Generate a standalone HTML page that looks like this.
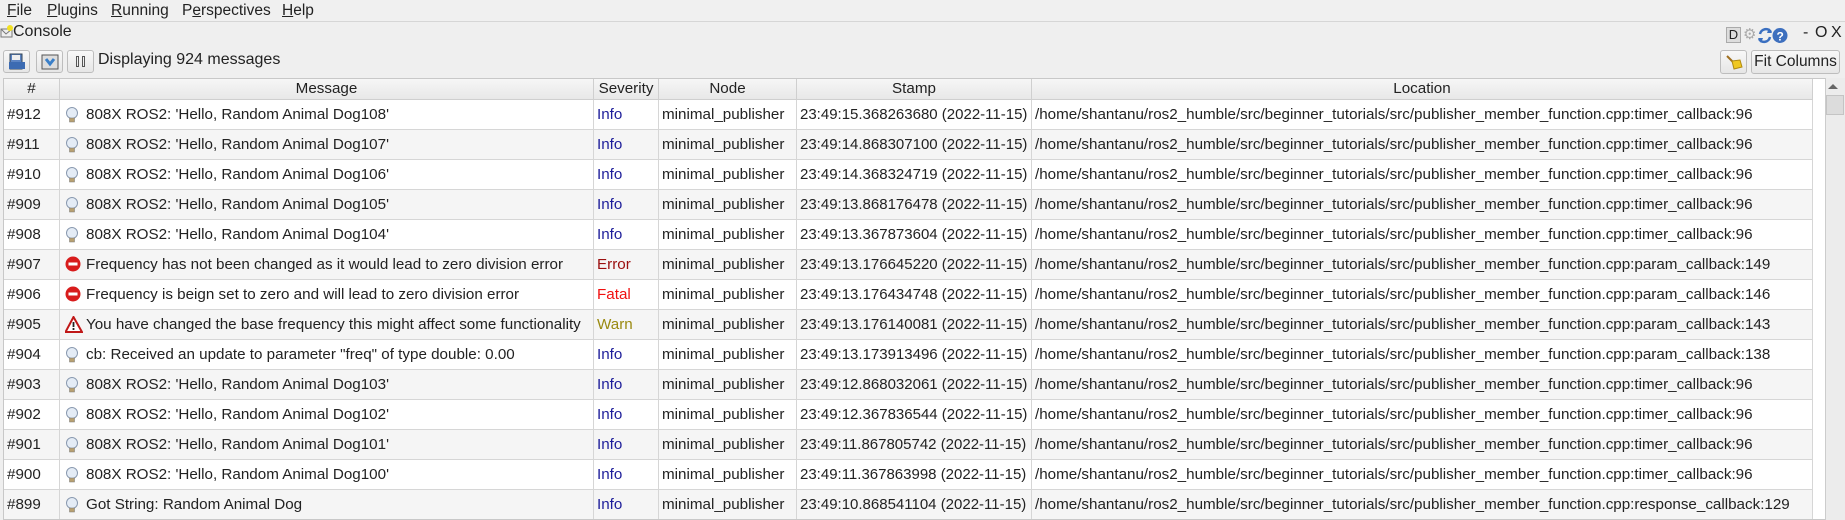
<!DOCTYPE html>
<html><head><meta charset="utf-8"><style>
*{margin:0;padding:0;box-sizing:border-box}
body{width:1845px;height:520px;overflow:hidden;background:#efefef;font-family:"Liberation Sans",sans-serif;font-size:15px;color:#222;position:relative}
.a{position:absolute;white-space:nowrap}
.menu{top:0;left:0;width:1845px;height:22px;background:#f0f0f0;border-bottom:1px solid #d6d6d6}
.menu span{position:absolute;top:2px;font-size:15.5px}
.btn{position:absolute;border:1px solid #bdbdbd;border-radius:3px;background:linear-gradient(#f8f8f8,#e6e6e6)}
.tbl{left:3px;top:78px;width:1823px;height:442px;background:#fff;border:1px solid #c8c8c8;overflow:hidden}
.hdr{position:absolute;top:0;height:21px;background:linear-gradient(#f6f6f6,#e8e8e8);border-right:1px solid #cfcfcf;border-bottom:1px solid #cfcfcf;text-align:center;line-height:20px;font-size:15.2px}
.row{position:absolute;left:0;width:1809px;height:30px;border-bottom:1px solid #d6d6d6}
.row.g{background:#f5f5f5}
.c{position:absolute;top:0;height:30px;line-height:29px;border-right:1px solid #d6d6d6;padding-left:3px;overflow:hidden;white-space:nowrap;font-size:15.2px}
.info{color:#1e1e9a}.err{color:#9b1010}.fat{color:#f01010}.warn{color:#9a8a10}
.ic{position:absolute;left:5px;top:6px}
</style></head><body>
<div class="a menu">
<span style="left:7px"><u>F</u>ile</span>
<span style="left:47px"><u>P</u>lugins</span>
<span style="left:111px"><u>R</u>unning</span>
<span style="left:182px">P<u>e</u>rspectives</span>
<span style="left:282px"><u>H</u>elp</span>
</div>
<svg class="a" style="left:0;top:25px" width="14" height="14"><rect x="1" y="4" width="11" height="8" fill="#eee" stroke="#777"/><path d="M1 4 L6 9 L12 4" fill="none" stroke="#777"/><circle cx="10" cy="3" r="3" fill="#f2e020"/></svg>
<div class="a" style="left:13px;top:23px;font-size:16px">Console</div>
<div class="a" style="left:1726px;top:27px;width:15px;height:16px;background:#ddd;border:1px solid #aaa;font-size:13px;line-height:14px;text-align:center">D</div>
<div class="a" style="left:1743px;top:25px;color:#aaa;font-size:15px">⚙</div>
<svg class="a" style="left:1757px;top:27px" width="32" height="17"><path d="M3 7 A6 6 0 0 1 14 5" fill="none" stroke="#3a6fc0" stroke-width="2.5"/><path d="M13 10 A6 6 0 0 1 2 12" fill="none" stroke="#3a6fc0" stroke-width="2.5"/><path d="M12 1 L15 6 L10 6 Z" fill="#3a6fc0"/><path d="M4 16 L1 11 L6 11 Z" fill="#3a6fc0"/><circle cx="23" cy="8.5" r="7.5" fill="#3d6fbe"/><text x="19.5" y="13.5" font-size="12" fill="#fff" font-family="Liberation Sans" font-weight="bold">?</text></svg>
<div class="a" style="left:1803px;top:24px;font-size:16px">-</div>
<div class="a" style="left:1815px;top:24px;font-size:16px">O</div>
<div class="a" style="left:1831px;top:24px;font-size:16px">X</div>
<div class="btn" style="left:3px;top:50px;width:27px;height:23px"></div>
<svg class="a" style="left:8px;top:53px" width="18" height="18"><rect x="2" y="1" width="12" height="15" fill="#5b84c4" stroke="#345"/><rect x="4" y="2" width="8" height="5" fill="#eee"/><rect x="1" y="9" width="16" height="7" fill="#3c6bb2"/></svg>
<div class="btn" style="left:36px;top:50px;width:27px;height:23px"></div>
<svg class="a" style="left:41px;top:53px" width="18" height="18"><rect x="1" y="2" width="16" height="14" fill="#ddd" stroke="#555"/><path d="M5 6 L9 11 L13 6" fill="none" stroke="#3a7fc8" stroke-width="3"/></svg>
<div class="btn" style="left:67px;top:50px;width:27px;height:23px"></div>
<div class="a" style="left:76px;top:56px;width:3px;height:11px;border:1px solid #555"></div>
<div class="a" style="left:82px;top:56px;width:3px;height:11px;border:1px solid #555"></div>
<div class="a" style="left:98px;top:51px;font-size:16px">Displaying 924 messages</div>
<div class="btn" style="left:1720px;top:50px;width:27px;height:24px"></div>
<svg class="a" style="left:1724px;top:53px" width="20" height="18"><path d="M3 3 L9 9" stroke="#a07020" stroke-width="2"/><path d="M8 8 L16 7 L18 14 L10 16 Z" fill="#f0c820" stroke="#b08a10"/></svg>
<div class="btn" style="left:1751px;top:50px;width:89px;height:24px;text-align:center;line-height:22px;font-size:15.5px">Fit Columns</div>
<div class="a tbl">
<div class="hdr" style="left:0;width:56px">#</div>
<div class="hdr" style="left:56px;width:534px">Message</div>
<div class="hdr" style="left:590px;width:65px">Severity</div>
<div class="hdr" style="left:655px;width:138px">Node</div>
<div class="hdr" style="left:793px;width:235px">Stamp</div>
<div class="hdr" style="left:1028px;width:781px">Location</div>
<div id="rows"></div>
</div>
<div class="a" style="left:1825px;top:78px;width:20px;height:442px;background:#ececec;border-left:1px solid #ccc"></div>
<div class="a" style="left:1828px;top:84px;width:0;height:0;border-left:5px solid transparent;border-right:5px solid transparent;border-bottom:5px solid #666"></div>
<div class="a" style="left:1826px;top:95px;width:18px;height:20px;background:#dcdcdc;border:1px solid #c4c4c4"></div>
<script>
var B='<svg class="ic" width="14" height="18"><circle cx="7" cy="7" r="5.5" fill="#e4ecf6" stroke="#8a9ab0"/><rect x="4.5" y="12" width="5" height="4" fill="#b8a070" stroke="#777" stroke-width=".5"/></svg>';
var E='<svg class="ic" width="18" height="18"><circle cx="8" cy="8" r="7.5" fill="#d81c1c"/><rect x="3.5" y="6.5" width="9" height="3" fill="#fff"/></svg>';
var W='<svg class="ic" width="18" height="18"><path d="M8.5 1 L17 16 L0.5 16 Z" fill="#fff" stroke="#c01818" stroke-width="2"/><rect x="7.6" y="6" width="1.8" height="5" fill="#222"/><rect x="7.6" y="12" width="1.8" height="2" fill="#222"/></svg>';
var P='/home/shantanu/ros2_humble/src/beginner_tutorials/src/publisher_member_function.cpp:';
var d=[
['912',B,"808X ROS2: 'Hello, Random Animal Dog108'",'info','Info','23:49:15.368263680','timer_callback:96'],
['911',B,"808X ROS2: 'Hello, Random Animal Dog107'",'info','Info','23:49:14.868307100','timer_callback:96'],
['910',B,"808X ROS2: 'Hello, Random Animal Dog106'",'info','Info','23:49:14.368324719','timer_callback:96'],
['909',B,"808X ROS2: 'Hello, Random Animal Dog105'",'info','Info','23:49:13.868176478','timer_callback:96'],
['908',B,"808X ROS2: 'Hello, Random Animal Dog104'",'info','Info','23:49:13.367873604','timer_callback:96'],
['907',E,"Frequency has not been changed as it would lead to zero division error",'err','Error','23:49:13.176645220','param_callback:149'],
['906',E,"Frequency is beign set to zero and will lead to zero division error",'fat','Fatal','23:49:13.176434748','param_callback:146'],
['905',W,"You have changed the base frequency this might affect some functionality",'warn','Warn','23:49:13.176140081','param_callback:143'],
['904',B,'cb: Received an update to parameter "freq" of type double: 0.00','info','Info','23:49:13.173913496','param_callback:138'],
['903',B,"808X ROS2: 'Hello, Random Animal Dog103'",'info','Info','23:49:12.868032061','timer_callback:96'],
['902',B,"808X ROS2: 'Hello, Random Animal Dog102'",'info','Info','23:49:12.367836544','timer_callback:96'],
['901',B,"808X ROS2: 'Hello, Random Animal Dog101'",'info','Info','23:49:11.867805742','timer_callback:96'],
['900',B,"808X ROS2: 'Hello, Random Animal Dog100'",'info','Info','23:49:11.367863998','timer_callback:96'],
['899',B,"Got String: Random Animal Dog",'info','Info','23:49:10.868541104','response_callback:129']];
var h='';
d.forEach(function(r,i){
h+='<div class="row'+(i%2?' g':'')+'" style="top:'+(21+i*30)+'px">'+
'<div class="c" style="left:0;width:56px">#'+r[0]+'</div>'+
'<div class="c" style="left:56px;width:534px;padding-left:26px">'+r[1]+r[2].replace(/</g,'&lt;')+'</div>'+
'<div class="c '+r[3]+'" style="left:590px;width:65px">'+r[4]+'</div>'+
'<div class="c" style="left:655px;width:138px">minimal_publisher</div>'+
'<div class="c" style="left:793px;width:235px;font-size:15px">'+r[5]+' (2022-11-15)</div>'+
'<div class="c" style="left:1028px;width:781px">'+P+r[6]+'</div></div>';});
document.getElementById('rows').innerHTML=h;
</script>
</body></html>
